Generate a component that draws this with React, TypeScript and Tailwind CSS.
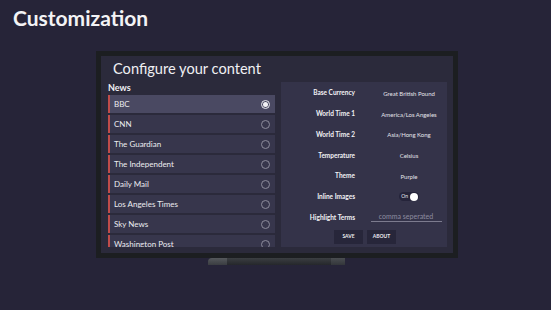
import React from "react";

const news = [
  "BBC",
  "CNN",
  "The Guardian",
  "The Independent",
  "Daily Mail",
  "Los Angeles Times",
  "Sky News",
  "Washington Post",
];

const settings: [string, string][] = [
  ["Base Currency", "Great British Pound"],
  ["World Time 1", "America/Los Angeles"],
  ["World Time 2", "Asia/Hong Kong"],
  ["Temperature", "Celsius"],
  ["Theme", "Purple"],
];

function Radio({ on }: { on: boolean }) {
  return on ? (
    <div className="w-[9px] h-[9px] rounded-full border border-[#e8e8ee] flex items-center justify-center">
      <div className="w-[5px] h-[5px] rounded-full bg-[#f2f2f5]" />
    </div>
  ) : (
    <div className="w-[9px] h-[9px] rounded-full border border-[#8d8c9c]" />
  );
}

export default function App() {
  return (
    <div
      className="w-[551px] h-[310px] bg-[#262438] overflow-hidden"
      style={{ fontFamily: 'Lato, "Open Sans", sans-serif' }}
    >
      <h1 className="pl-[13px] pt-[4px] h-[51px] text-[21px] leading-[28px] font-bold text-[#f3f3f5]">
        Customization
      </h1>
      <div className="ml-[96px] w-[362px] h-[207px] border-[5px] border-[#1c1e21] bg-[#2b2a3b] flex flex-col">
        <div className="h-[26px] pl-[12px] pt-[2px] text-[14.6px] leading-[22px] text-[#f0f0f3]">
          Configure your content
        </div>
        <div className="flex gap-[6px] pl-[7px] pr-[6px] h-[165px]">
          <div className="w-[167px] flex flex-col">
            <div className="h-[13px] text-[9px] leading-[12px] font-bold text-[#f0f0f3]">News</div>
            <div className="flex-1 overflow-hidden flex flex-col gap-[2px]">
              {news.map((n, i) => (
                <div
                  key={n}
                  className={`h-[18px] shrink-0 flex items-center justify-between border-l-2 border-[#c04c4a] pl-[4px] pr-[5px] ${
                    i === 0 ? "bg-[#4a4962]" : "bg-[#37364c]"
                  }`}
                >
                  <span className="text-[8px] text-[#ececf0]">{n}</span>
                  <Radio on={i === 0} />
                </div>
              ))}
            </div>
          </div>
          <div className="w-[166px] bg-[#343349] flex flex-col pt-[1px]">
            {settings.map(([k, v]) => (
              <div key={k} className="h-[20.7px] flex items-center">
                <div className="w-[74px] text-right text-[6.5px] font-bold text-[#f2f2f5]">{k}</div>
                <div className="flex-1 text-center text-[6px] text-[#e4e4ea] pl-[16px]">{v}</div>
              </div>
            ))}
            <div className="h-[20.7px] flex items-center">
              <div className="w-[74px] text-right text-[6.5px] font-bold text-[#f2f2f5]">Inline Images</div>
              <div className="flex-1 flex justify-center pl-[16px]">
                <div className="w-[20px] h-[9px] rounded-full bg-[#25243a] flex items-center justify-end pr-[1px] gap-[2px]">
                  <span className="text-[5px] text-[#e8e8ee]">On</span>
                  <div className="w-[8px] h-[8px] rounded-full bg-white" />
                </div>
              </div>
            </div>
            <div className="h-[20.7px] flex items-center">
              <div className="w-[74px] text-right text-[6.5px] font-bold text-[#f2f2f5]">Highlight Terms</div>
              <div className="flex-1 flex justify-center pl-[10px]">
                <div className="w-[71px] border-b border-[#7c7b8e] text-center text-[7px] leading-[9px] text-[#8e8da0]">
                  comma seperated
                </div>
              </div>
            </div>
            <div className="flex justify-center gap-[4px] pt-[2px] pl-[2px]">
              <div className="w-[29px] h-[14px] bg-[#27263a] flex items-center justify-center text-[5px] font-bold text-[#ececf0]">
                SAVE
              </div>
              <div className="w-[29px] h-[14px] bg-[#27263a] flex items-center justify-center text-[5px] font-bold text-[#ececf0]">
                ABOUT
              </div>
            </div>
          </div>
        </div>
      </div>
      <div className="ml-[208px] w-[137px] h-[7px] flex">
        <div className="w-[19px] h-full bg-gradient-to-b from-[#55585c] to-[#3a3d41] rounded-tl-[4px]" />
        <div className="flex-1 h-full bg-gradient-to-b from-[#3b3e42] to-[#25272b]" />
        <div className="w-[14px] h-full bg-gradient-to-b from-[#4a4d51] to-[#33363a]" />
      </div>
    </div>
  );
}
